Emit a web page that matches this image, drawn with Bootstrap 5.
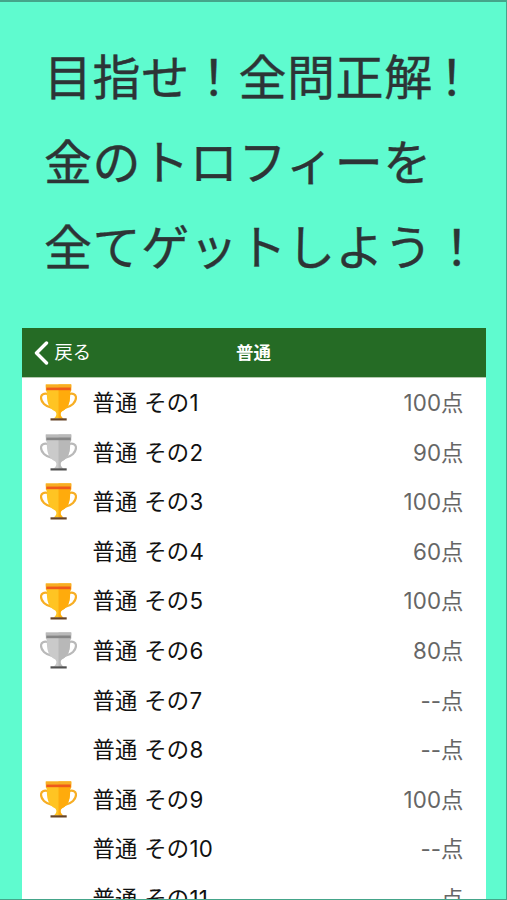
<!DOCTYPE html>
<html lang="ja">
<head>
<meta charset="utf-8">
<meta name="viewport" content="width=device-width, initial-scale=1">
<title>普通</title>
<link href="https://cdn.jsdelivr.net/npm/bootstrap@5.3.0/dist/css/bootstrap.min.css" rel="stylesheet">
<style>
body{font-family:Inter,"Noto Sans CJK JP",sans-serif;background:#5ffbcf}
.stage{height:900px;border:solid #45a58a;border-width:2px 1px 1px 0}
.headline{height:326px;padding:30px 0 0 44px;font:400 48px/85px "Noto Sans CJK JP",sans-serif;letter-spacing:.6px;color:#2d3436;-webkit-text-stroke:.4px #2d3436}
.headline .tight{letter-spacing:-4.4px}
.phone{width:464px;margin-left:21.5px;height:571px}
.topbar{height:50px;background:#256b25;font-size:18.3px;color:#fff;border-bottom:1px solid #b5c9b0}
.topbar .side{width:150px;padding-left:12px}
.topbar .heading{font-size:17.5px;font-weight:600;padding-top:2px}
.back-label{margin-left:5px;padding-top:1px}
.score-row{height:49.6px;font-size:22.3px;line-height:49.6px;color:#111;padding:0 22px 0 18px}
.row-name{letter-spacing:.3px}
.cup{width:37px;height:37px;margin-right:16px}
.points{color:#666;letter-spacing:.1px}
</style>
</head>
<body class="overflow-hidden">
<svg class="d-none">
<symbol id="trophy" viewBox="0 0 37 37">
<path d="M8 10C-1 8 0 16 4 20c3 3 6 3 9 4M29 10c9-2 8 6 4 10-3 3-6 3-9 4" fill="none" stroke="var(--rim)" stroke-width="2.2"/>
<path d="M5.800 .5h25.400v6l-1 1.500c0 9-.8 16-8.500 19.500-1.700 1.500-1.700 5 1.800 7h-10c3.500-2 3.500-5.500 1.800-7C7.600 24 6.800 17 6.800 8l-1-1.500z" fill="var(--light)"/>
<path d="M18.500 .5h12.700v6l-1 1.500c0 9-.8 16-8.500 19.500-1.700 1.500-1.700 5 1.800 7h-5z" fill="var(--dark)"/>
<path d="M5.800 .5h25.400v3H5.800z" fill="var(--rim)"/>
<path d="M6.300 3.500h24.400v2.700H6.300z" fill="var(--band)"/>
<path d="M10.500 34.300h16.200v2.200H10.500z" fill="var(--base)"/>
</symbol>
</svg>
<main class="stage overflow-hidden">
<h1 class="headline m-0 text-nowrap">目指せ！全問正<span class="tight">解</span>！<br>金のトロフィーを<br>全てゲットしよう！</h1>
<section class="phone bg-white overflow-hidden">
<header class="topbar d-flex align-items-center">
<div class="side d-flex align-items-center"><svg width="16" height="24" viewBox="0 0 16 24" fill="none" stroke="#fff" stroke-width="3.4" stroke-linecap="round" stroke-linejoin="round"><path d="M12.500 2 2.500 12l10 10"/></svg><span class="back-label">戻る</span></div>
<div class="heading flex-grow-1 text-center">普通</div>
<div class="side"></div>
</header>
<div id="rows"></div>
</section>
</main>
<script src="https://cdn.jsdelivr.net/npm/bootstrap@5.3.0/dist/js/bootstrap.bundle.min.js"></script>
<script>
const scores=[100,90,100,60,100,80,'--','--',100,'--','--'];
const gold='--light:#ffc423;--dark:#ffab0c;--rim:#f7ae24;--band:#ee5a1c;--base:#654326';
const silver='--light:#cacaca;--dark:#b8b8b8;--rim:#b9b9b9;--band:#858585;--base:#505050';
document.getElementById('rows').innerHTML=scores.map((s,i)=>{
const tone=s===100?gold:s>=80?silver:'';
const cup=tone?`<svg class="cup" style="${tone}"><use href="#trophy"/></svg>`:'<span class="cup"></span>';
return `<div class="score-row d-flex align-items-center">${cup}<span class="row-name flex-grow-1">普通 その${i+1}</span><span class="points">${s}点</span></div>`;
}).join('');
</script>
</body>
</html>
